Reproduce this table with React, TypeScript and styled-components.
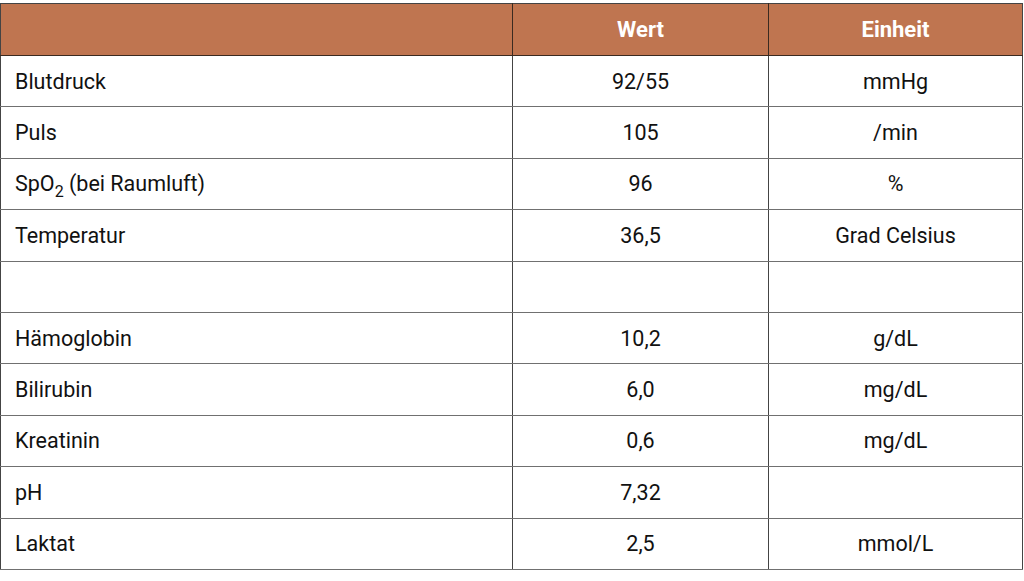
import React from 'react'
import styled, { createGlobalStyle } from 'styled-components'

const GlobalStyles = createGlobalStyle`
  html, body {
    margin: 0;
    padding: 0;
    background: #ffffff;
  }
  body {
    font-family: Roboto, "Liberation Sans", sans-serif;
    color: #111111;
  }
`

const Page = styled.div`
  padding: 3px 2px 0 0;
`

const Table = styled.table`
  width: 1022px;
  border-collapse: collapse;
  table-layout: fixed;
  border: 1.5px solid #444444;
`

const HeadCell = styled.th`
  background-color: #bf7550;
  color: #ffffff;
  font-weight: 700;
  font-size: 22px;
  height: 51px;
  padding: 0;
  text-align: center;
  border-left: 1.5px solid #3a2a20;
  border-bottom: 1.5px solid #3a2a20;

  &:first-child {
    border-left: 0;
  }
`

const Cell = styled.td<{ $align?: 'left' | 'center' }>`
  font-size: 21.5px;
  height: 50.4px;
  padding: 0 0 0 ${p => (p.$align === 'left' ? '14px' : '0')};
  text-align: ${p => p.$align || 'center'};
  border-left: 1.5px solid #444444;
  border-bottom: 1.5px solid #707070;

  &:first-child {
    border-left: 0;
  }

  sub {
    font-size: 16px;
    vertical-align: -6px;
    line-height: 0;
  }
`

type Row = { label: React.ReactNode; value: string; unit: string }

const rows: Row[] = [
  { label: 'Blutdruck', value: '92/55', unit: 'mmHg' },
  { label: 'Puls', value: '105', unit: '/min' },
  { label: <>SpO<sub>2</sub> (bei Raumluft)</>, value: '96', unit: '%' },
  { label: 'Temperatur', value: '36,5', unit: 'Grad Celsius' },
  { label: '', value: '', unit: '' },
  { label: 'Hämoglobin', value: '10,2', unit: 'g/dL' },
  { label: 'Bilirubin', value: '6,0', unit: 'mg/dL' },
  { label: 'Kreatinin', value: '0,6', unit: 'mg/dL' },
  { label: 'pH', value: '7,32', unit: '' },
  { label: 'Laktat', value: '2,5', unit: 'mmol/L' },
]

const App = () => {
  return (
    <>
      <GlobalStyles />
      <Page>
        <Table>
          <colgroup>
            <col style={{ width: 512 }} />
            <col style={{ width: 256 }} />
            <col style={{ width: 254 }} />
          </colgroup>
          <thead>
            <tr>
              <HeadCell></HeadCell>
              <HeadCell>Wert</HeadCell>
              <HeadCell>Einheit</HeadCell>
            </tr>
          </thead>
          <tbody>
            {rows.map((row, i) => (
              <tr key={i}>
                <Cell $align="left">{row.label}</Cell>
                <Cell>{row.value}</Cell>
                <Cell>{row.unit}</Cell>
              </tr>
            ))}
          </tbody>
        </Table>
      </Page>
    </>
  )
}

export default App
